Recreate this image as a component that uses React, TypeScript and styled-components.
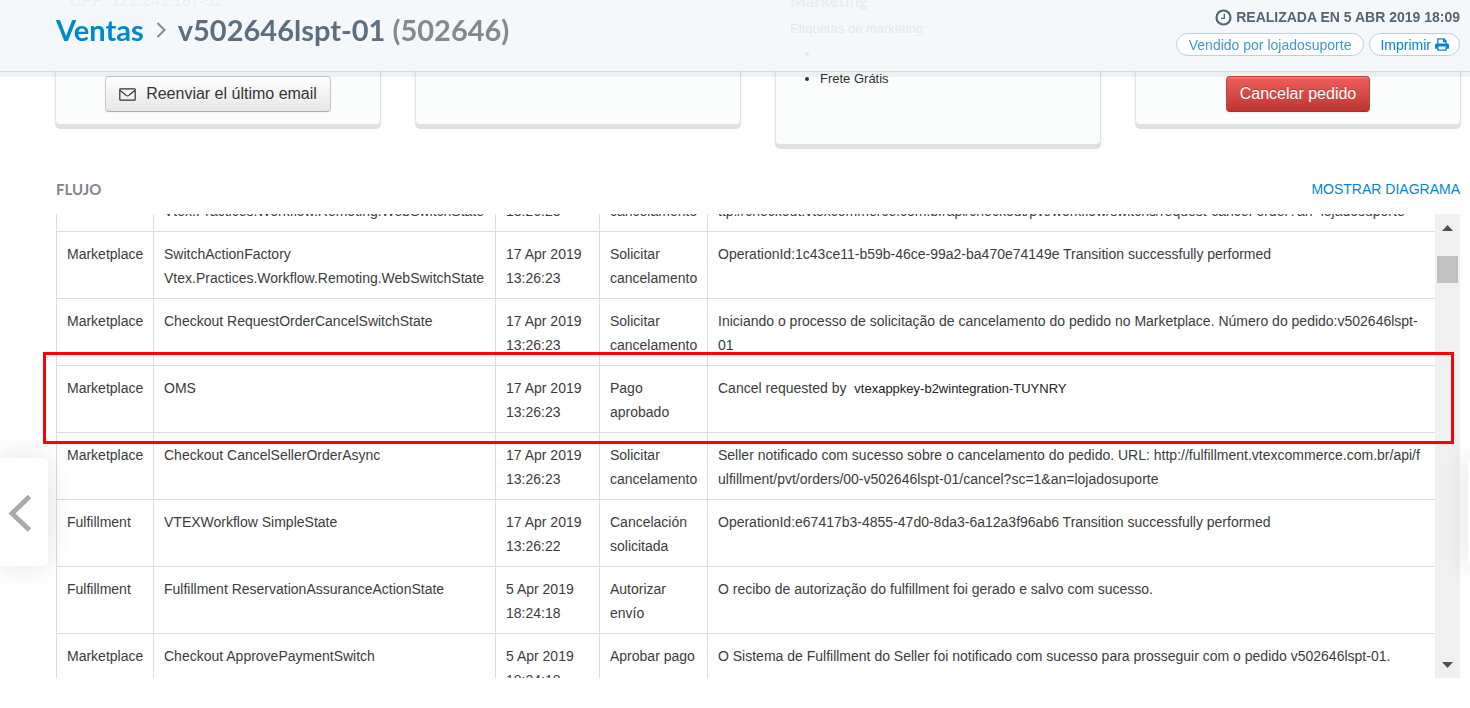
import React from "react";
import styled, { createGlobalStyle } from "styled-components";

const GlobalStyle = createGlobalStyle`
  * { box-sizing: border-box; }
  body {
    margin: 0;
    background: #fff;
    color: #333;
    font: 14px/24px "Liberation Sans", Arial, sans-serif;
    overflow: hidden;
  }
  button { font-family: inherit; cursor: pointer; }
  a { color: #08c; text-decoration: none; }
`;

const Page = styled.div`
  position: relative;
  height: 100vh;
  overflow: hidden;
`;

const Header = styled.header`
  position: fixed;
  top: 0;
  left: 0;
  right: 0;
  z-index: 10;
  display: flex;
  justify-content: space-between;
  height: 72px;
  padding: 0 10px 0 56px;
  background: rgba(243, 247, 251, 0.92);
  border-bottom: 1px solid #d9dcde;
  box-shadow: 0 5px 0 rgba(0, 0, 0, 0.05);
`;

const Title = styled.h1`
  display: flex;
  align-items: center;
  margin: 0;
  height: 60px;
  color: #5b6f80;
  font: 700 29px/60px Lato, sans-serif;
  white-space: pre;
`;

const Separator = styled.svg`
  width: 10px;
  height: 18px;
  margin: 0 12px;
`;

const Sequence = styled.span`
  color: #888;
`;

const HeaderSide = styled.div`
  display: flex;
  flex-direction: column;
  align-items: flex-end;
  gap: 5px;
  padding-top: 6px;
`;

const Placed = styled.div`
  display: flex;
  align-items: center;
  gap: 4px;
  height: 22px;
  color: #566573;
  font-weight: 700;
  text-transform: uppercase;
`;

const Pills = styled.div`
  display: flex;
  gap: 5px;
`;

const Pill = styled.a<{ $soft?: boolean }>`
  display: flex;
  align-items: center;
  gap: 4px;
  height: 23px;
  padding: 0 ${(p) => (p.$soft ? 12 : 10)}px;
  color: ${(p) => (p.$soft ? "#3d9cca" : "#08c")};
  background: #fff;
  border: 1px solid #bcd0dc;
  border-radius: 12px;
`;

const Cards = styled.section`
  display: grid;
  grid-template-columns: repeat(4, 1fr);
  align-items: start;
  gap: 34px;
  margin-top: -12px;
  padding: 0 9px 0 55px;
`;

const Card = styled.article<{ $tall?: boolean }>`
  display: flex;
  flex-direction: column;
  height: ${(p) => (p.$tall ? 157 : 137)}px;
  padding: 0 14px;
  font-size: 13px;
  background: #fbfdfc;
  border: 1px solid #e3e5e4;
  border-radius: 5px;
  box-shadow: 0 4px 0 #e0e0e0, 0 0 5px rgba(0, 0, 0, 0.08);
`;

const CardLine = styled.p`
  margin: 0;
  font-size: 16px;
  color: #777;
`;

const CardTitle = styled.h2`
  margin: 0 0 4px;
  color: #777;
  font: 700 17px/24px Lato, sans-serif;
`;

const CardText = styled.p`
  margin: 0;
`;

const Tags = styled.ul`
  margin: 0;
  padding-left: 30px;
  line-height: 25px;
`;

const CardFooter = styled.div`
  display: flex;
  justify-content: center;
  margin: auto -14px 0;
  padding: 12px 0;
  border-top: 1px solid #e3e5e4;
`;

const Button = styled.button<{ $danger?: boolean }>`
  display: flex;
  align-items: center;
  gap: 10px;
  height: 36px;
  padding: 0 13px;
  font-size: 16px;
  line-height: 24px;
  color: ${(p) => (p.$danger ? "#fff" : "#333")};
  background: ${(p) =>
    p.$danger
      ? "linear-gradient(#ee5f5b, #bd362f)"
      : "linear-gradient(#fff, #e6e6e6)"};
  border: 1px solid ${(p) => (p.$danger ? "#c3403a" : "#c8c8c8")};
  border-bottom-color: ${(p) => (p.$danger ? "#a92f29" : "#acacac")};
  border-radius: 4px;
  text-shadow: ${(p) =>
    p.$danger ? "0 -1px 0 rgba(0,0,0,.25)" : "0 1px 1px rgba(255,255,255,.75)"};
  box-shadow: inset 0 1px 0 rgba(255, 255, 255, 0.2), 0 1px 2px rgba(0, 0, 0, 0.05);
`;

const Flow = styled.section`
  padding: 0 10px 0 56px;
  margin-top: 32px;
`;

const FlowHead = styled.div`
  display: flex;
  align-items: center;
  justify-content: space-between;
  height: 24px;
  margin-bottom: 13px;
`;

const FlowTitle = styled.h2`
  margin: 0;
  color: #80878c;
  font: 700 15px/24px Lato, sans-serif;
`;

const Panel = styled.div`
  position: relative;
  display: flex;
  height: 464px;
`;

const Scroller = styled.div`
  flex: 1;
  overflow: hidden;
`;

const Table = styled.table`
  width: 100%;
  margin-top: -26px;
  color: #3c3c3c;
  table-layout: fixed;
  border-collapse: separate;
  border-spacing: 0;
`;

const Col = styled.col<{ $w?: number }>`
  width: ${(p) => (p.$w ? `${p.$w}px` : "auto")};
`;

const Cell = styled.td<{ $wrap?: boolean }>`
  padding: 10px 10px 8px;
  vertical-align: top;
  border-top: 1px solid #ddd;
  border-left: 1px solid #ddd;
  word-break: ${(p) => (p.$wrap ? "break-all" : "normal")};
`;

const AppKey = styled.span`
  padding-left: 4px;
  color: #222;
  font-size: 13px;
`;

const Track = styled.div`
  display: flex;
  flex-direction: column;
  width: 25px;
  background: #f0f0f0;
`;

const Arrow = styled.button`
  height: 27px;
  padding: 0;
  border: 0;
  background: none;
  line-height: 0;
`;

const Rail = styled.div`
  flex: 1;
  padding: 15px 2px 0;
`;

const Thumb = styled.div`
  height: 27px;
  background: #c1c1c1;
`;

const Highlight = styled.div`
  position: absolute;
  top: 138px;
  left: -13px;
  right: 6px;
  height: 92px;
  border: 3px solid #f00;
  pointer-events: none;
`;

const PageNav = styled.button<{ $next?: boolean }>`
  position: fixed;
  top: 458px;
  ${(p) => (p.$next ? "right: -46px;" : "left: 0;")}
  z-index: 5;
  width: 48px;
  height: 108px;
  padding: 0;
  border: 0;
  border-radius: ${(p) => (p.$next ? "5px 0 0 5px" : "0 5px 5px 0")};
  background: #fff;
  box-shadow: 0 0 30px rgba(0, 0, 0, 0.12);
  line-height: 0;
`;

type Row = [string, string, string, string, React.ReactNode];

const rows: Row[] = [
  ["", "Vtex.Practices.Workflow.Remoting.WebSwitchState", "13:26:23", "cancelamento", "ttp://checkout.vtexcommerce.com.br/api/checkout/pvt/workflow/switchs/request-cancel-order?an=lojadosuporte"],
  ["Marketplace", "SwitchActionFactory Vtex.Practices.Workflow.Remoting.WebSwitchState", "17 Apr 2019 13:26:23", "Solicitar cancelamento", "OperationId:1c43ce11-b59b-46ce-99a2-ba470e74149e Transition successfully performed"],
  ["Marketplace", "Checkout RequestOrderCancelSwitchState", "17 Apr 2019 13:26:23", "Solicitar cancelamento", "Iniciando o processo de solicitação de cancelamento do pedido no Marketplace. Número do pedido:v502646lspt-01"],
  ["Marketplace", "OMS", "17 Apr 2019 13:26:23", "Pago aprobado", <>Cancel requested by <AppKey>vtexappkey-b2wintegration-TUYNRY</AppKey></>],
  ["Marketplace", "Checkout CancelSellerOrderAsync", "17 Apr 2019 13:26:23", "Solicitar cancelamento", "Seller notificado com sucesso sobre o cancelamento do pedido. URL: http://fulfillment.vtexcommerce.com.br/api/fulfillment/pvt/orders/00-v502646lspt-01/cancel?sc=1&an=lojadosuporte"],
  ["Fulfillment", "VTEXWorkflow SimpleState", "17 Apr 2019 13:26:22", "Cancelación solicitada", "OperationId:e67417b3-4855-47d0-8da3-6a12a3f96ab6 Transition successfully performed"],
  ["Fulfillment", "Fulfillment ReservationAssuranceActionState", "5 Apr 2019 18:24:18", "Autorizar envío", "O recibo de autorização do fulfillment foi gerado e salvo com sucesso."],
  ["Marketplace", "Checkout ApprovePaymentSwitch", "5 Apr 2019 18:24:18", "Aprobar pago", "O Sistema de Fulfillment do Seller foi notificado com sucesso para prosseguir com o pedido v502646lspt-01."],
];

const ClockIcon = () => (
  <svg width="17" height="17" viewBox="0 0 17 17" fill="none" stroke="#566573" aria-hidden="true">
    <circle cx="8.5" cy="8.5" r="7" strokeWidth="2.2" />
    <path d="M9.300 4.500v4.800H6" strokeWidth="1.300" />
  </svg>
);

const PrinterIcon = () => (
  <svg width="14" height="13" viewBox="0 0 13 12" aria-hidden="true">
    <path d="M2.700 6V.8h5.600l2 2V6M8 .8v2.400h2.300" fill="none" stroke="#08c" strokeWidth="1.200" />
    <path d="M1.600 5h9.800c.9 0 1.600.7 1.600 1.600V10h-2.400V8.200H2.400V10H0V6.600C0 5.700.7 5 1.600 5z" fill="#08c" />
    <path d="M2.700 8v3.300h7.600V8" fill="#fff" stroke="#08c" strokeWidth="1.200" />
  </svg>
);

const MailIcon = () => (
  <svg width="17" height="13" viewBox="0 0 17 13" fill="none" stroke="#333" strokeWidth="1.2" aria-hidden="true">
    <rect x=".8" y=".8" width="15.400" height="11.400" rx=".6" />
    <path d="M1 2.500c2.400 1.800 4.300 3.200 6.100 4.900q1.400 1.200 2.800 0C11.700 5.700 13.600 4.300 16 2.500" />
  </svg>
);

export default function App() {
  return (
    <Page>
      <GlobalStyle />
      <Header>
        <Title>
          <a href="#ventas">Ventas</a>
          <Separator viewBox="0 0 10 18" fill="none" stroke="#888" strokeWidth="2" aria-hidden="true">
            <path d="M1.500 2l7 7-7 7" />
          </Separator>
          v502646lspt-01 <Sequence>(502646)</Sequence>
        </Title>
        <HeaderSide>
          <Placed><ClockIcon />Realizada en 5 abr 2019 18:09</Placed>
          <Pills>
            <Pill href="#seller" $soft>Vendido por lojadosuporte</Pill>
            <Pill href="#imprimir">Imprimir<PrinterIcon /></Pill>
          </Pills>
        </HeaderSide>
      </Header>

      <Cards>
        <Card>
          <CardLine>CPF: 122.241.187-52</CardLine>
          <CardFooter>
            <Button type="button"><MailIcon />Reenviar el último email</Button>
          </CardFooter>
        </Card>
        <Card />
        <Card $tall>
          <CardTitle>Marketing</CardTitle>
          <CardText>Etiquetas de marketing:</CardText>
          <Tags>
            <li>&nbsp;</li>
            <li>Frete Grátis</li>
          </Tags>
        </Card>
        <Card>
          <CardFooter>
            <Button type="button" $danger>Cancelar pedido</Button>
          </CardFooter>
        </Card>
      </Cards>

      <Flow>
        <FlowHead>
          <FlowTitle>FLUJO</FlowTitle>
          <a href="#diagrama">MOSTRAR DIAGRAMA</a>
        </FlowHead>
        <Panel>
          <Scroller>
            <Table>
              <colgroup>
                <Col $w={97} />
                <Col $w={342} />
                <Col $w={104} />
                <Col $w={108} />
                <Col />
              </colgroup>
              <tbody>
                {rows.map((row, i) => (
                  <tr key={i}>
                    {row.map((value, j) => (
                      <Cell key={j} $wrap={j === 4}>{value}</Cell>
                    ))}
                  </tr>
                ))}
              </tbody>
            </Table>
          </Scroller>
          <Track>
            <Arrow type="button" aria-label="Subir">
              <svg width="11" height="6" viewBox="0 0 11 6"><path d="M0 6l5.500-6L11 6z" fill="#505050" /></svg>
            </Arrow>
            <Rail><Thumb /></Rail>
            <Arrow type="button" aria-label="Bajar">
              <svg width="11" height="6" viewBox="0 0 11 6"><path d="M0 0l5.500 6L11 0z" fill="#505050" /></svg>
            </Arrow>
          </Track>
          <Highlight />
        </Panel>
      </Flow>

      <PageNav type="button" aria-label="Anterior">
        <svg width="48" height="108" viewBox="0 0 48 108" fill="none" stroke="#aaa" strokeWidth="5">
          <path d="M29.500 38.500L12 55.500l17.500 16.500" />
        </svg>
      </PageNav>
      <PageNav type="button" aria-label="Siguiente" $next />
    </Page>
  );
}
